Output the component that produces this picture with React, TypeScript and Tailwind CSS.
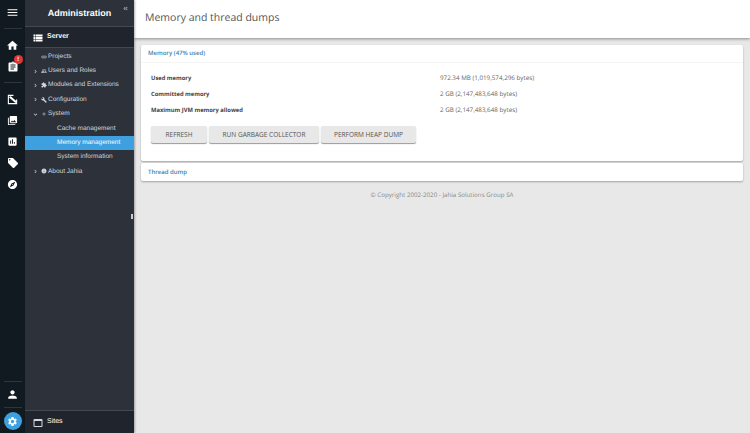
import React from 'react';
import {
  MdMenu, MdHome, MdAssignment, MdPhotoLibrary, MdAssessment, MdLocalOffer, MdExplore, MdPerson,
  MdSettings, MdViewList, MdWebAsset, MdChevronRight, MdExpandMore, MdKeyboardDoubleArrowLeft,
  MdPeople, MdExtension, MdBuild, MdAdd, MdInfo, MdLink,
} from 'react-icons/md';

const NAV = [
  { label: 'Projects', icon: MdLink, arrow: null },
  { label: 'Users and Roles', icon: MdPeople, arrow: 'right' },
  { label: 'Modules and Extensions', icon: MdExtension, arrow: 'right' },
  { label: 'Configuration', icon: MdBuild, arrow: 'right' },
  { label: 'System', icon: MdAdd, arrow: 'down' },
];

const ROWS = [
  ['Used memory', '972.34 MB (1,019,574,296 bytes)'],
  ['Committed memory', '2 GB (2,147,483,648 bytes)'],
  ['Maximum JVM memory allowed', '2 GB (2,147,483,648 bytes)'],
];

// box with a diagonal tool across its top corner
const ContentIcon = () => (
  <svg viewBox="0 0 12 12" className="w-[11px] h-[11px] mt-[11px]" fill="none" stroke="currentColor">
    <path d="M7 1.5H1.5V10.5H10.5V6" strokeWidth="1.2" />
    <path d="M3 3L10 9" strokeWidth="2.4" />
  </svg>
);

const Rail = () => (
  <div className="w-[25px] h-[433px] shrink-0 bg-[#111a21] flex flex-col items-center text-white">
    <MdMenu className="mt-[6px] text-[13px]" />
    <div className="w-[18px] h-px bg-[#2f353b] mt-[9px]" />
    <MdHome className="mt-[10px] text-[13px]" />
    <div className="relative mt-[9px] h-[12px]">
      <MdAssignment className="text-[12px]" />
      <span className="absolute -top-[6px] left-[7px] w-[9px] h-[9px] rounded-full bg-[#e0353b] text-[6px] leading-[9px] text-center font-bold">!</span>
    </div>
    <div className="w-[18px] h-px bg-[#2f353b] mt-[9px]" />
    <ContentIcon />
    <MdPhotoLibrary className="mt-[10px] text-[11px]" />
    <MdAssessment className="mt-[10px] text-[11px]" />
    <MdLocalOffer className="mt-[10px] text-[12px]" />
    <MdExplore className="mt-[10px] text-[11px]" />
    <div className="flex-1" />
    <div className="w-[18px] h-px bg-[#2f353b]" />
    <MdPerson className="mt-[6px] text-[13px]" />
    <div className="w-[18px] h-px bg-[#2f353b] mt-[6px]" />
    <div className="mt-[4px] mb-[3px] w-[18px] h-[18px] rounded-full bg-[#3ea0de] flex items-center justify-center">
      <MdSettings className="text-[11px]" />
    </div>
  </div>
);

const Sidebar = () => (
  <div className="relative w-[109px] h-[433px] shrink-0 bg-[#2d3139] flex flex-col font-['Liberation_Sans',sans-serif] text-[#d5d7da] shadow-[1px_0_2px_rgba(0,0,0,0.3)]">
    <div className="h-[27px] flex items-center justify-center text-white text-[9px] font-bold pt-[1px] border-b border-[#444951]">Administration</div>
    <MdKeyboardDoubleArrowLeft className="absolute top-[5px] right-[5px] text-[7px] text-[#c8cacc]" />
    <div className="h-[21px] bg-[#20252d] border-b border-[#444951] flex items-center pl-[7px] pt-[1px] text-white text-[7px] font-bold">
      <MdViewList className="text-[12px] mr-[3px]" />
      Server
    </div>
    <div className="pt-[1.5px] text-[6.5px]">
      {NAV.map((n) => (
        <div key={n.label} className="h-[14.35px] flex items-center">
          <span className="w-[8px] ml-[6px] flex justify-center">
            {n.arrow === 'right' && <MdChevronRight className="text-[7px]" />}
            {n.arrow === 'down' && <MdExpandMore className="text-[7px]" />}
          </span>
          <span className="w-[7px] mx-[1px] flex justify-center"><n.icon className="text-[6px]" /></span>
          <span>{n.label}</span>
        </div>
      ))}
      <div className="h-[14.35px] flex items-center pl-[32px]">Cache management</div>
      <div className="h-[14.35px] flex items-center pl-[32px] bg-[#3ea0de] text-white">Memory management</div>
      <div className="h-[14.35px] flex items-center pl-[32px]">System information</div>
      <div className="h-[14.35px] flex items-center">
        <span className="w-[8px] ml-[6px] flex justify-center"><MdChevronRight className="text-[7px]" /></span>
        <span className="w-[7px] mx-[1px] flex justify-center"><MdInfo className="text-[6px]" /></span>
        <span>About Jahia</span>
      </div>
    </div>
    <div className="absolute top-[214px] right-[1px] w-[2px] h-[5px] bg-[#c9cbcd]" />
    <div className="mt-auto h-[23px] bg-[#20252d] border-t border-[#444951] flex items-center pl-[7px] pt-[1px] text-white text-[7px]">
      <MdWebAsset className="text-[12px] mr-[3px] text-[#d5d7da]" />
      Sites
    </div>
  </div>
);

export default function App() {
  return (
    <div className="flex w-[750px] h-[433px] overflow-hidden bg-[#e8e8e8] [text-rendering:geometricPrecision]">
      <Rail />
      <Sidebar />
      <div className="flex-1 flex flex-col font-['Open_Sans',sans-serif]">
        <div className="h-[38px] bg-white shadow-[0_1px_3px_rgba(0,0,0,0.4)] flex items-center pl-[11px] text-[10.5px] text-[#555]">Memory and thread dumps</div>
        <div className="pl-[7px] pr-[7px] pt-[7px]">
          <div className="bg-white rounded-[2px] shadow-[0_1px_2px_rgba(0,0,0,0.3)]">
            <div className="h-[18px] border-b border-[#f5f5f5] flex items-center pl-[7px] text-[6px] font-semibold text-[#3a7fb0]">Memory (47% used)</div>
            <div className="px-[10px] pt-[7px] pb-[18px]">
              {ROWS.map(([k, v]) => (
                <div key={k} className="h-[16px] flex items-center">
                  <span className="w-[289px] text-[5.8px] font-bold text-[#444]">{k}</span>
                  <span className="text-[6.25px] text-[#666]">{v}</span>
                </div>
              ))}
              <div className="flex gap-[2px] mt-[8px]">
                <button className="w-[56px] h-[17px] bg-[#e8e8e8] rounded-[2px] text-[6.5px] text-[#555] shadow-[0_1px_1px_rgba(0,0,0,0.4)]">REFRESH</button>
                <button className="w-[110px] h-[17px] bg-[#e8e8e8] rounded-[2px] text-[6.5px] text-[#555] shadow-[0_1px_1px_rgba(0,0,0,0.4)]">RUN GARBAGE COLLECTOR</button>
                <button className="w-[95px] h-[17px] bg-[#e8e8e8] rounded-[2px] text-[6.5px] text-[#555] shadow-[0_1px_1px_rgba(0,0,0,0.4)]">PERFORM HEAP DUMP</button>
              </div>
            </div>
          </div>
          <div className="mt-[2px] h-[18px] bg-white rounded-[2px] shadow-[0_1px_2px_rgba(0,0,0,0.3)] flex items-center pl-[7px] text-[6px] font-semibold text-[#3a7fb0]">Thread dump</div>
          <div className="mt-[9px] text-center text-[6.2px] text-[#888]">© Copyright 2002-2020 - Jahia Solutions Group SA</div>
        </div>
      </div>
    </div>
  );
}
